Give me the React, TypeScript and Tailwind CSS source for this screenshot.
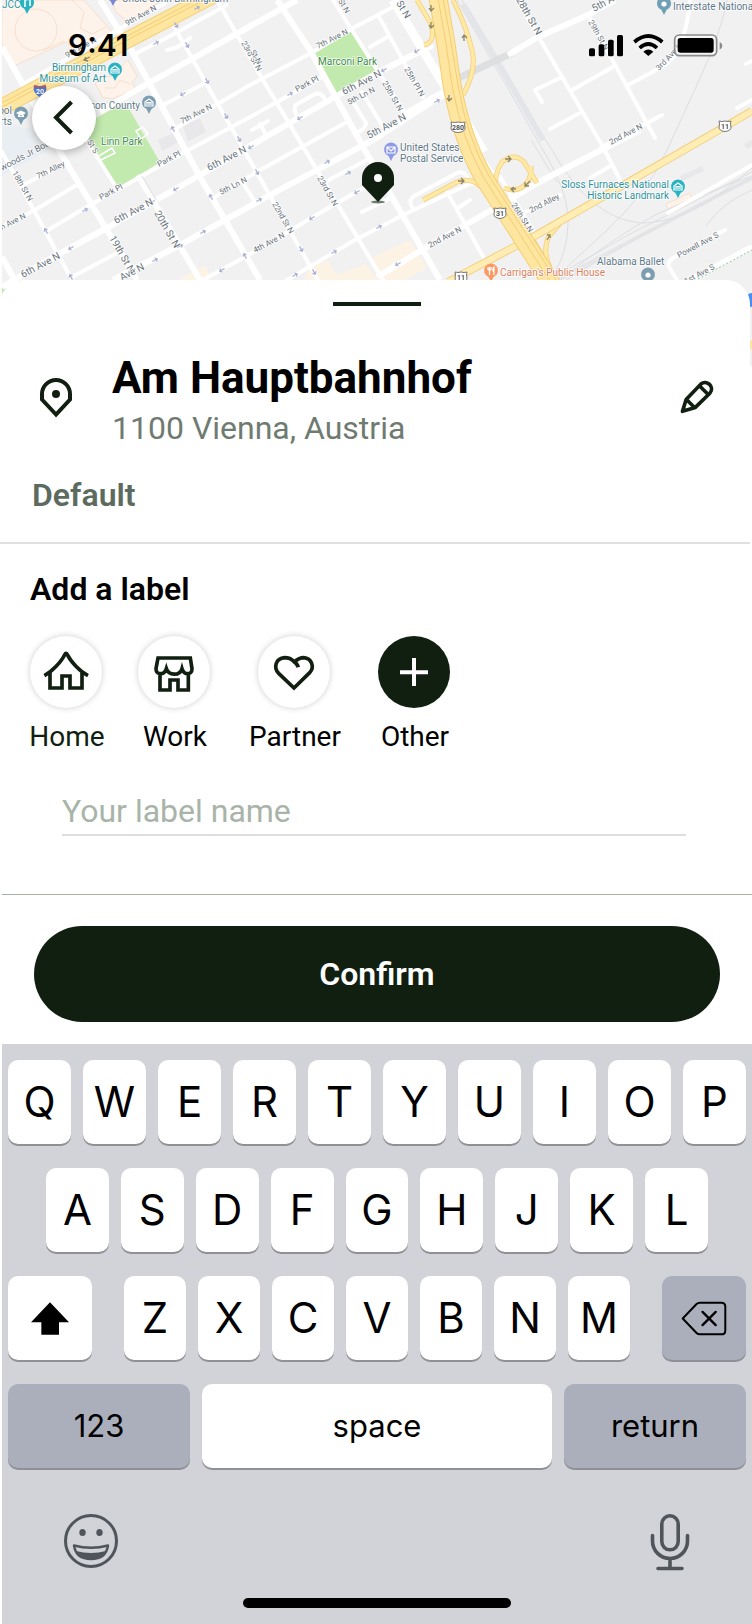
import React, { useState } from 'react';

const minorRoads = [
  'M2 152L72 280', 'M82 133L118 190', 'M172 23L240 143L318 280', 'M217 0L263 80L383 280',
  'M333 0L377 70L403 110', 'M378 15L423 97', 'M517 0L603 147L620 180', 'M588 15L655 138',
  'M690 0Q688 28 678 50Q672 62 660 68L628 85', 'M560 78L535 90L542 102', 'M572 90L613 67',
  'M550 129L580 113', 'M600 148L662 115', 'M737 108L752 100', 'M746 64L752 61', 'M25 83L123 27L165 3',
  'M133 55L172 35L227 5', 'M163 105L207 82', 'M173 130L250 85L313 52L353 28L397 5',
  'M48 230L90 205L183 153L250 117L322 77', 'M23 185L68 162', 'M2 227L35 210L80 183',
  'M213 198L260 170L347 122', 'M72 277L117 253', 'M203 280L250 254L337 203L390 173',
  'M287 280L355 240L403 215L463 187L500 170', 'M362 212L393 197', 'M323 183L367 160',
  'M523 213L560 195', 'M447 192L485 260', 'M458 208L470 200', 'M725 230L673 258Q667 262 669 267L677 280',
  'M668 213L752 165', 'M412 207Q408 200 414 196L457 173Q464 170 468 179L473 184',
  'M296 114Q292 106 299 103L315 94Q322 92 325 100', 'M252 130L268 121M260 124L265 133',
  'M353 102L366 123Q366 129 356 133', 'M362 92L383 127', 'M370 47L389 36', 'M468 140L492 172', 'M590 178L612 165', 'M243 183L255 202',
  'M167 50Q180 48 190 38', 'M500 177L533 230',
];
const mediumRoads = [
  'M2 47L63 157L137 280', 'M2 257L14 279', 'M138 175L200 280', 'M100 0L133 53L200 177L260 280',
  'M100 112L140 88L297 0', 'M2 287L57 255L107 228L200 175L300 117L377 73L433 45', 'M113 280L180 245L270 195L373 140L450 90',
  'M277 0L310 50L363 147L440 280', 'M508 55L538 37L588 15L615 0', 'M377 277L422 250L500 205L543 180L640 130',
  'M687 282L752 247',
];
const rails = [
  'M457 0L510 92L543 150Q570 195 568 225Q567 252 555 272', 'M462 0L515 92L552 150Q590 218 640 223Q690 224 752 168',
  'M727 0Q722 30 697 85L667 150Q650 190 605 232L555 278', 'M560 280Q610 240 655 215Q700 195 752 176',
  'M552 278L632 233L752 172', 'M566 280L640 236L752 178', 'M706 226Q720 204 752 190', 'M531 140L557 182',
];

const streetLabels: [string, number, number, number, number][] = [
  ['9th Ave N', 127, 26, -29, 8], ['9th Ave N', 67, 58, -29, 8], ['23rd St N', 241, 43, 60, 8], ['7th Ave N', 182, 124, -27, 8],
  ['6th Ave N', 116, 224, -28, 10], ['6th Ave N', 23, 278, -28, 10], ['6th Ave N', 209, 171, -27, 10],
  ['6th Ave N', 344, 95, -27, 10], ['5th Ave N', 369, 139, -28, 10], ['7th Alley', 38, 179, -26, 8],
  ['18th St N', 12, 173, 60, 8], ['20th St N', 154, 213, 60, 10], ['19th St N', 109, 238, 60, 10],
  ['Park Pl', 101, 200, -28, 8], ['Park Pl', 159, 167, -28, 8], ['Park Pl', 297, 92, -28, 8],
  ['5th Ln N', 221, 195, -27, 8], ['5th Ln N', 349, 105, -27, 8], ['7th Ave N', 318, 49, -27, 8],
  ['23rd St N', 317, 178, 60, 8], ['22nd St N', 272, 204, 60, 8], ['25th St N', 382, 83, 60, 8],
  ['25th Pl N', 404, 69, 60, 8], ['St N', 396, 3, 60, 10], ['St N', 338, 1, 60, 8], ['St N', 250, 52, 60, 8],
  ['4th Ave N', 255, 253, -28, 8], ['2nd Ave N', 430, 248, -28, 8], ['2nd Ave N', 611, 145, -28, 8],
  ['28th St N', 516, 0, 60, 10], ['29th St N', 588, 22, 60, 8], ['5th Ave N', 594, 12, -28, 10],
  ['3rd Ave N', 659, 71, -46, 8], ['2nd Alley', 531, 213, -27, 8], ['26th St N', 511, 205, 57, 8],
  ['Powell Ave S', 679, 258, -28, 8], ['1st Ave S', 686, 284, -28, 8], ['Ave N', 122, 281, -28, 10],
  ['n Ave N', 2, 230, -27, 8], ['woods Jr Bou', 2, 171, -28, 9], ['St S', 87, 142, 60, 8], ['2nd', 611, 145, -28, 8],
];

const arrows: [number, number, number][] = [
  [85, 210, -28], [46, 231, 240], [71, 248, 150], [71, 277, 240], [152, 202, 150], [176, 189, 150], [155, 260, -28], [180, 246, -28],
  [203, 232, -28], [211, 197, 240], [222, 270, 150], [245, 256, 240], [251, 147, 150], [257, 172, 60], [156, 43, -28], [176, 25, 60],
  [187, 45, 60], [197, 8, -28], [207, 81, 60], [183, 94, 150], [226, 116, 60], [173, 129, 240], [239, 139, 60],
  [290, 94, -28], [300, 118, 150], [384, 70, 150], [417, 51, 150], [437, 101, -28], [327, 162, -28], [348, 173, -28],
  [357, 192, 150], [312, 218, 150], [379, 227, -28], [334, 252, -28], [301, 249, 60], [314, 272, 60], [295, 275, -28], [398, 264, 150], [259, 200, -28],
];

function Pin({ x, y, color, children }: { x: number; y: number; color: string; children?: React.ReactNode }) {
  return (
    <g transform={`translate(${x} ${y})`}>
      <path d="M0 11L-2.500 6A7 7 0 1 1 2.500 6Z" fill={color} />
      {children ?? <circle r="2.600" fill="#fff" />}
    </g>
  );
}

const museum = <path d="M-4 -1L0 -4L4 -1V3H-4ZM-2 2V-.5H2V2M0 0V2" fill="none" stroke="#fff" strokeWidth="1.200" />;

function Shield({ x, y, label }: { x: number; y: number; label: string }) {
  const w = label.length > 2 ? 7 : 6;
  return (
    <g transform={`translate(${x} ${y})`}>
      <path d={`M${-w} -5Q-3 -4 0 -5Q3 -4 ${w} -5Q${w - 1} -2 ${w} 1Q${w} 5 0 5.500Q${-w} 5 ${-w} 1Q${1 - w} -2 ${-w} -5Z`} fill="#fff" stroke="#777" />
      <text y="3" textAnchor="middle" fontSize="7" fontWeight="600" fill="#444">{label}</text>
    </g>
  );
}

function CityMap() {
  return (
    <svg className="absolute inset-x-0 top-0 h-[366px] w-full" viewBox="0 0 752 366" preserveAspectRatio="xMidYMid slice" fontFamily="Roboto, sans-serif" aria-label="Map">
      <rect width="752" height="366" fill="#f1f1f2" />
      <path d="M2 122L34 130L52 148L2 176Z" fill="#e9eef2" />
      <g fill="#fef3eb" stroke="#f8dfcb">
        <path d="M2 10L18 0H84L113 33L74 50L66 42L14 66L2 44Z" />
        <circle cx="36" cy="30" r="21" />
        <path d="M72 0L84 12L80 28L92 34L106 27M44 50L64 41" fill="none" />
        <path d="M116 12L112 2L118 0H162L128 22Z" />
        <path d="M95 84L100 78L112 76L128 60L137 76L132 82L136 90L124 94L112 99L102 97L99 90Z" />
        <path d="M105 88H115L120 80L130 84" fill="none" />
        <path d="M666 204L690 193L692 198L668 209Z" />
      </g>
      <g fill="#fcf3e5">
        <path d="M373 257L410 240L427 268L405 280H383L373 268Z" />
        <path d="M310 265L329 261L336 275L366 264L378 280H304Z" />
        <path d="M178 280L205 265L212 280Z" />
      </g>
      <path d="M158 140L174 133L178 142L162 151ZM182 123L200 119L206 132L188 141ZM680 176L702 166L704 171L682 181ZM744 144L752 140V146L747 149Z" fill="#e8e8ea" />
      <path d="M96 118L125 102L143 133L160 162L117 189L87 136Z" fill="#c2eaae" />
      <path d="M313 53L353 30L377 71L336 94Z" fill="#c2eaae" />
      <path d="M2 288H40V310H2Z" fill="#bfe8a9" />
      <path d="M97 157L112 148L115 153L101 160M136 131L143 127L148 134L141 139Z" fill="none" stroke="#fff" strokeWidth="1.500" />
      <g fill="none" stroke="#dcdee1" strokeWidth="1">{rails.map((d) => <path key={d} d={d} />)}</g>
      <path d="M463 4L500 66L543 140" fill="none" stroke="#e3e5e8" strokeWidth="6" />
      <path d="M556 281L640 236L752 178" fill="none" stroke="#dfe1e4" strokeWidth="4" opacity=".7" />
      <path d="M450 82L512 53" stroke="#dedfe0" strokeWidth="7" />
      <g fill="none" stroke="#fff" strokeWidth="4" strokeLinecap="round" strokeLinejoin="round">{minorRoads.map((d) => <path key={d} d={d} />)}</g>
      <g fill="none" stroke="#fff" strokeWidth="6" strokeLinejoin="round">{mediumRoads.map((d) => <path key={d} d={d} />)}</g>
      <path d="M393 0L433 67L452 98L484 152M404 116L450 90" fill="none" stroke="#fff" strokeWidth="9" />
      <path d="M142 176L156 200" stroke="#ddd" />
      <g fill="none" stroke="#f2cf79" strokeWidth="5">
        <path d="M453 0Q466 25 472 50Q477 70 463 95M417 0L431 24Q436 43 424 45" />
        <path d="M423 200L457 182Q473 176 484 190L502 212" />
        <path d="M537 183L524 162Q514 152 502 162Q493 176 496 192M531 166C532 184 520 194 504 188" />
        <path d="M561 222L549 236Q542 250 550 268M530 235L552 272" />
      </g>
      <g fill="none" stroke="#ffe9a5" strokeWidth="3.500">
        <path d="M453 0Q466 25 472 50Q477 70 463 95M417 0L431 24Q436 43 424 45" />
        <path d="M423 200L457 182Q473 176 484 190L502 212" />
        <path d="M537 183L524 162Q514 152 502 162Q493 176 496 192M531 166C532 184 520 194 504 188" />
        <path d="M561 222L549 236Q542 250 550 268M530 235L552 272" />
      </g>
      <path d="M448 282L533 237L752 111" fill="none" stroke="#f2d081" strokeWidth="8" />
      <path d="M448 282L533 237L752 111" fill="none" stroke="#ffedb3" strokeWidth="6" />
      <path d="M0 108L53 80L133 37L212 -4" fill="none" stroke="#f4cf72" strokeWidth="17" />
      <path d="M0 108L53 80L133 37L212 -4" fill="none" stroke="#ffe6a0" strokeWidth="15" />
      <path d="M0 108L53 80L133 37L212 -4M0 104L53 76L133 33L204 -4" fill="none" stroke="#f3cd73" />
      <path d="M438 -2Q446 40 452 85Q462 140 484 178L553 286" fill="none" stroke="#f4cf72" strokeWidth="19" />
      <path d="M438 -2Q446 40 452 85Q462 140 484 178L553 286" fill="none" stroke="#ffe6a0" strokeWidth="17" />
      <path d="M438 -2Q446 40 452 85Q462 140 484 178L553 286M443 -2Q451 40 458 85Q467 138 489 176L556 280" fill="none" stroke="#f3cd73" />
      <path d="M698 279L752 250" stroke="#86c893" strokeDasharray="2 2" />
      <g fill="none" stroke="#a9afd2" strokeWidth="1.200">
        {arrows.map(([x, y, a]) => <path key={`${x}-${y}`} transform={`translate(${x} ${y}) rotate(${a})`} d="M-3 0H2.500M.5 -2L2.500 0L.5 2" />)}
      </g>
      <g fill="none" stroke="#8c8462" strokeWidth="1.300">
        <path d="M431 5V11M429 8L431 11L434 8M431 22V28M429 25L431 28L434 25M464 41V35M462 38L464 35L467 38M449 95V101M447 98L449 101L452 98" />
        <path d="M458 181H464M461 178L464 181L461 184M505 159H511M508 156L511 159L508 162M530 181L525 186M525 182V186H529M516 189H511M514 187L511 189L514 192M547 240L550 235M547 235H550V238M90 57L84 60M86 57L84 60L88 61" />
      </g>
      <g fill="#68727a" stroke="#fff" strokeWidth="1.500" strokeLinejoin="round" paintOrder="stroke">
        {streetLabels.map(([t, x, y, a, s], i) => <text key={i} transform={`translate(${x} ${y}) rotate(${a})`} fontSize={s}>{t}</text>)}
      </g>
      <g fontSize="10" stroke="#fff" strokeWidth="1.500" strokeLinejoin="round" paintOrder="stroke">
        <g fill="#2b929b">
          <text x="2" y="8">JCC</text>
          <text x="106" y="71" textAnchor="end">Birmingham</text>
          <text x="106" y="82" textAnchor="end">Museum of Art</text>
          <text x="669" y="188" textAnchor="end">Sloss Furnaces National</text>
          <text x="669" y="199" textAnchor="end">Historic Landmark</text>
        </g>
        <g fill="#5d7887">
          <text x="140" y="109" textAnchor="end">Jefferson County</text>
          <text x="122" y="2">Uncle John Birmingham</text>
          <text x="400" y="151">United States</text>
          <text x="400" y="162">Postal Service</text>
          <text x="673" y="10">Interstate National</text>
          <text x="597" y="265">Alabama Ballet</text>
          <text x="12" y="114" textAnchor="end">School</text>
          <text x="12" y="125" textAnchor="end">of Arts</text>
        </g>
        <g fill="#3c8c46">
          <text x="101" y="145">Linn Park</text>
          <text x="318" y="65">Marconi Park</text>
        </g>
        <text x="500" y="276" fill="#d9805d">Carrigan's Public House</text>
      </g>
      <Pin x={27} y={3} color="#27b3c2"><path d="M-2 3V-3L3 -4V2M-3 3H-1M2 2H4" stroke="#fff" strokeWidth="1.500" fill="none" /></Pin>
      <Pin x={115} y={70} color="#27b3c2">{museum}</Pin>
      <Pin x={678} y={187} color="#27b3c2">{museum}</Pin>
      <Pin x={149} y={103} color="#7d9eb0">{museum}</Pin>
      <Pin x={21} y={114} color="#7d9eb0"><path d="M-5 -1L0 -3.500L5 -1L0 2ZM-3 1V3H3V1Z" fill="#fff" /></Pin>
      <Pin x={113} y={-5} color="#7b86d8" />
      <Pin x={391} y={150} color="#8d9ae6"><path d="M-4 -3H4V3H-4ZM-4 -3L0 1L4 -3" fill="none" stroke="#fff" strokeWidth="1.200" /></Pin>
      <Pin x={664} y={4} color="#6fa0b6" />
      <Pin x={491} y={271} color="#fb9a65"><path d="M-3 -4V-1M-1.500 -4V4M0 -4V-1M-3 -1H0M3 4V-4Q1.500 -3 2 0H3" fill="none" stroke="#fff" strokeWidth="1.200" /></Pin>
      <Pin x={648} y={275} color="#7d9eb0" />
      <circle cx="752" cy="300" r="7" fill="#4b8df6" />
      <path d="M748 342L752 340V349L748 351Z" fill="#ffe6a0" />
      <Shield x={458} y={127} label="280" />
      <Shield x={500} y={213} label="31" />
      <Shield x={461} y={277} label="11" />
      <Shield x={725} y={126} label="11" />
      <path d="M34 85Q40 87 46 85Q48 93 40 97Q32 93 34 85Z" fill="#4f77c5" />
      <path d="M34 87V85Q40 87 46 85V87Z" fill="#d8504d" />
      <text x="40" y="94" textAnchor="middle" fontSize="7" fontWeight="700" fill="#fff">20</text>
      <rect width="2" height="366" fill="#fff" />
      <ellipse cx="378" cy="202" rx="7" ry="1.500" fill="#6f7d70" />
      <path d="M378 202L362 185V178A16 16 0 0 1 394 178V185Z" fill="#111f11" />
      <circle cx="378" cy="178" r="4" fill="#fff" />
    </svg>
  );
}

function StatusIcons() {
  return (
    <svg className="h-6 w-[134px]" viewBox="268 100 402 72" aria-hidden="true">
      <rect x="268" y="146" width="18" height="24" rx="5" />
      <rect x="297" y="134" width="17" height="36" rx="5" />
      <rect x="325" y="120" width="17" height="50" rx="5" />
      <rect x="352" y="106" width="18" height="64" rx="5" />
      <g fill="none" stroke="#000" strokeWidth="11">
        <path d="M404 127Q446 91 488 127" />
        <path d="M420 145Q446 121 472 145" />
      </g>
      <path d="M431 156Q446 143 461 156L446 169Z" />
      <rect x="525" y="106" width="126" height="62" rx="14" fill="#fff" fillOpacity=".4" stroke="#8a8a8a" strokeWidth="5" />
      <rect x="534" y="115" width="108" height="44" rx="8" />
      <path d="M660 127Q668 130 668 138Q668 146 660 150Z" fill="#8a8a8a" />
    </svg>
  );
}

const ink = { fill: 'none', stroke: '#111f11' };

const labels = [
  { name: 'Home', text: 'text-[#111f11]', width: 'w-[72px]', disc: 'bg-white shadow-[0_0_6px_rgba(0,0,0,0.2)]', icon: (
    <svg viewBox="90 228 216 216" className="size-[72px]" {...ink} strokeWidth="11"><path d="M133 347C156 335 184 305 194 284Q198 276 202 284C212 305 240 335 264 347M150 338V384H186V348H210V384H246V338" /></svg>) },
  { name: 'Work', text: 'text-black', width: 'w-[72px]', disc: 'bg-white shadow-[0_0_6px_rgba(0,0,0,0.2)]', icon: (
    <svg viewBox="414 228 216 216" className="size-[72px]" {...ink} strokeWidth="11"><path d="M474 294H571L576 326C576 346 552 346 546 326C540 348 506 348 499 326C493 346 468 346 468 326ZM480 342V390H510V360H534V390H565V342" /></svg>) },
  { name: 'Partner', text: 'text-black', width: 'w-24', disc: 'bg-white shadow-[0_0_6px_rgba(0,0,0,0.2)]', icon: (
    <svg viewBox="770 228 216 216" className="size-[72px]" {...ink} strokeWidth="11"><path d="M891 322Q888 311 877 304C868 294 858 293 850 293C822 295 816 324 832 340L878 384L925 338C940 322 932 295 907 293C896 293 888 298 877 307" /></svg>) },
  { name: 'Other', text: 'text-black', width: 'w-[72px]', disc: 'bg-[#111f11]', icon: (
    <svg viewBox="1132 228 216 216" className="size-[72px]" fill="none" stroke="#fff" strokeWidth="12"><path d="M1240 294V378M1198 337H1282" /></svg>) },
];

const keyBase = 'flex h-[84px] items-center justify-center rounded-[10px] font-[Inter,sans-serif] text-black shadow-[0_2px_0_#8f9196]';

function Letters({ letters, className }: { letters: string; className: string }) {
  return (
    <div className={className}>
      {letters.split('').map((l) => (
        <button key={l} type="button" className={`${keyBase} min-w-0 flex-1 bg-white text-[42px] leading-none`}>{l}</button>
      ))}
    </div>
  );
}

function Keyboard() {
  return (
    <section aria-label="Keyboard" className="ml-0.5 flex flex-col gap-6 bg-[#d2d3d9] px-1.5 pt-4 pb-4">
      <Letters letters="QWERTYUIOP" className="flex gap-3" />
      <Letters letters="ASDFGHJKL" className="flex gap-3 px-[38px]" />
      <div className="flex gap-8">
        <button type="button" aria-label="Shift" className={`${keyBase} w-[84px] bg-white`}>
          <svg viewBox="96 786 114 98" className="h-[33px] w-[38px]"><path d="M153 786L210 846H180V884H127V846H96Z" /></svg>
        </button>
        <Letters letters="ZXCVBNM" className="flex flex-1 gap-3" />
        <button type="button" aria-label="Delete" className={`${keyBase} w-[84px] bg-[#abafbb]`}>
          <svg viewBox="914 778 140 106" className="h-[35px] w-[47px]" fill="none" stroke="#000" strokeWidth="6" strokeLinejoin="round" strokeLinecap="round">
            <path d="M970 783H1035Q1047 783 1047 795V867Q1047 879 1035 879H970Q964 879 960 875L918 831L960 787Q964 783 970 783Z" />
            <path d="M978 811L1018 851M1018 811L978 851" strokeWidth="7" />
          </svg>
        </button>
      </div>
      <div className="flex gap-3 text-[31px]">
        <button type="button" className={`${keyBase} w-[182px] bg-[#abafbb]`}>123</button>
        <button type="button" className={`${keyBase} flex-1 bg-white`}>space</button>
        <button type="button" className={`${keyBase} w-[182px] bg-[#abafbb]`}>return</button>
      </div>
      <div className="flex items-start justify-between px-14 pt-[22px]">
        <button type="button" aria-label="Emoji">
          <svg viewBox="0 0 54 54" className="size-[54px]" fill="none" stroke="#50555c" strokeWidth="3">
            <circle cx="27" cy="27" r="25.500" />
            <ellipse cx="18.500" cy="18.500" rx="3.200" ry="3.500" fill="#50555c" stroke="none" />
            <ellipse cx="35.500" cy="18.500" rx="3.200" ry="3.500" fill="#50555c" stroke="none" />
            <path d="M10 31.500Q27 36 44 31.500Q42 45 27 45Q12 45 10 31.500Z" strokeWidth="2.400" strokeLinejoin="round" />
            <path d="M12 37Q27 41 42 37Q38 45 27 45Q16 45 12 37Z" fill="#50555c" stroke="none" />
          </svg>
        </button>
        <button type="button" aria-label="Dictate">
          <svg viewBox="0 0 40 57" className="h-[57px] w-10" fill="none" stroke="#50555c" strokeWidth="3.600" strokeLinecap="round">
            <rect x="11.800" y="1.800" width="16.400" height="34" rx="8.200" />
            <path d="M2.500 21.500V27A17.500 17.500 0 0 0 37.500 27V21.500M20 45V54M8 54.500H32" />
          </svg>
        </button>
      </div>
      <div className="mt-[3px] h-2.5 w-[268px] self-center rounded-full bg-black" />
    </section>
  );
}

export default function App() {
  const [label, setLabel] = useState('');
  return (
    <div className="relative overflow-hidden bg-white font-[Roboto,sans-serif]">
      <header className="relative h-[280px]">
        <CityMap />
        <div className="relative flex items-center justify-between pt-6 pr-[29px] pl-[68px]">
          <span className="font-[Inter,sans-serif] text-[30px] leading-[42px] font-semibold text-black">9:41</span>
          <StatusIcons />
        </div>
        <button type="button" aria-label="Back" className="relative mt-5 ml-8 block size-16 rounded-full bg-white shadow-[0_2px_8px_rgba(0,0,0,0.3)]">
          <svg viewBox="0 0 64 64" className="size-16" {...ink} strokeWidth="4"><path d="M39.500 16L24 31.500L39.500 47" /></svg>
        </button>
      </header>

      <main className="relative mr-0.5 rounded-t-3xl bg-white pt-[22px]">
        <div className="mx-auto h-1 w-[88px] translate-x-0.5 bg-[#111f11]" />
        <div className="flex items-center pt-[38px] pr-[35px] pl-8">
          <svg viewBox="0 0 48 48" className="size-12 shrink-0" {...ink} strokeWidth="4">
            <path d="M24 42.500L10 27.500V22A14 14 0 0 1 38 22V27.500Z" />
            <circle cx="24" cy="22" r="4" fill="#111f11" stroke="none" />
          </svg>
          <div className="ml-8 flex-1 pt-1">
            <h1 className="text-[44px] leading-[60px] font-bold text-black">Am Hauptbahnhof</h1>
            <p className="text-[32px] leading-10 text-[#6f7b71]">1100 Vienna, Austria</p>
          </div>
          <button type="button" aria-label="Edit address">
            <svg viewBox="180 57 105 106" className="size-[35px]" {...ink} strokeWidth="11" strokeLinejoin="round">
              <path d="M187 155L198 119L243 72C260 58 286 80 270 100L226 143ZM200 120L224 144M239 78L265 104" />
            </svg>
          </button>
        </div>
        <p className="mt-7 pl-8 text-[32px] leading-[38px] font-semibold text-[#5d6b5f]">Default</p>
        <hr className="mt-7 border-t-2 border-[#dfe0e0]" />

        <h2 className="mt-[26px] pl-[30px] text-[32px] leading-[38px] font-semibold text-black">Add a label</h2>
        <div className="mt-7 flex gap-9 pl-[30px]">
          {labels.map((l) => (
            <button key={l.name} type="button" className={`flex flex-col items-center gap-[13px] ${l.width}`}>
              <span className={`size-[72px] rounded-full ${l.disc}`}>{l.icon}</span>
              <span className={`pl-0.5 text-[28px] leading-8 ${l.text}`}>{l.name}</span>
            </button>
          ))}
        </div>
        <div className="mt-[35px] pr-16 pl-[62px]">
          <input
            aria-label="Your label name"
            placeholder="Your label name"
            value={label}
            onChange={(e) => setLabel(e.target.value)}
            className="block h-12 w-full border-b-2 border-[#dddede] text-[32px] leading-10 text-black outline-none placeholder:text-[#a9b4a9]"
          />
        </div>
      </main>

      <div className="mt-[58px] ml-0.5 border-t border-[#a5b0a7] px-8 pt-[31px] pb-[22px]">
        <button type="button" className="h-24 w-full rounded-full bg-[#111f11] text-[32px] font-semibold text-white">Confirm</button>
      </div>
      <Keyboard />
    </div>
  );
}
